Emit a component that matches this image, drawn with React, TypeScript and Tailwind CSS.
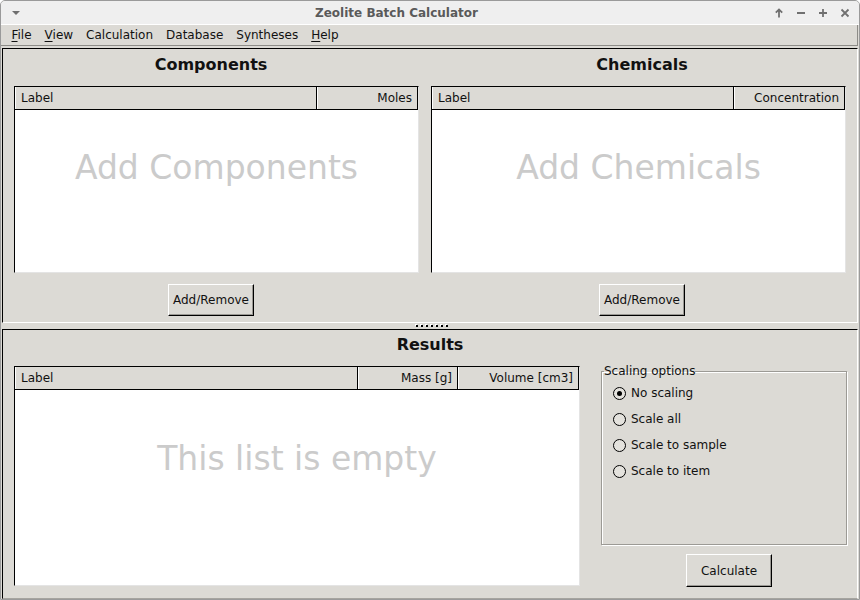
import React from 'react';

type Col = { label: string; width?: string; align?: 'left' | 'right' };

const Table: React.FC<{ cols: Col[]; placeholder: string; className: string; textTop: string }> = ({
  cols,
  placeholder,
  className,
  textTop,
}) => {
  return (
    <div className={`flex flex-col border-t border-l border-black border-b border-r border-b-[#e4e4e4] border-r-[#e4e4e4] ${className}`}>
      {/* header */}
      <div className="flex h-[23px] shrink-0 border-b border-black bg-[#dcdad5]">
        {cols.map((c) => (
          <div
            key={c.label}
            className={`flex items-center border-l border-white border-r border-r-black px-[5px] text-[12px] text-[#111] ${
              c.width ?? 'flex-1'
            } ${c.align === 'right' ? 'justify-end' : 'justify-start'}`}
          >
            {c.label}
          </div>
        ))}
      </div>
      {/* body */}
      <div className={`flex-1 bg-white ${textTop}`}>
        <div className="text-center text-[33px] leading-[40px] text-[#cbcbcb]">{placeholder}</div>
      </div>
    </div>
  );
};

const Button: React.FC<{ label: string; className?: string }> = ({ label, className }) => (
  <button
    className={`flex items-center justify-center border-t border-l border-white border-r border-b border-r-black border-b-black bg-[#dcdad5] text-[12px] text-[#111] shadow-[inset_-1px_-1px_0_#9a9893] ${className ?? ''}`}
  >
    {label}
  </button>
);

const Radio: React.FC<{ label: string; checked?: boolean }> = ({ label, checked }) => (
  <div className="flex h-[26px] items-center gap-[5px]">
    <span className="flex h-[13px] w-[13px] items-center justify-center rounded-full border border-black bg-[#e4e2dd]">
      {checked && <span className="h-[5px] w-[5px] rounded-full bg-black" />}
    </span>
    <span className="text-[12px] text-[#111]">{label}</span>
  </div>
);

const Menu: React.FC<{ label: string; u?: boolean }> = ({ label, u }) => (
  <span className="px-[6.5px] text-[12px] text-[#111]">
    {u ? (
      <>
        <span className="underline underline-offset-2">{label[0]}</span>
        {label.slice(1)}
      </>
    ) : (
      label
    )}
  </span>
);

const App: React.FC = () => {
  return (
    <div className="flex h-[600px] w-[860px] flex-col overflow-hidden rounded-t-[5px] border border-[#9a9a9a] bg-[#dcdad5] font-['DejaVu_Sans',sans-serif]">
      {/* title bar */}
      <div className="flex h-[24px] shrink-0 items-center border-b border-white bg-[#efefef]">
        <div className="flex w-[28px] justify-center pl-[1px]">
          <svg width="10" height="6" viewBox="0 0 10 6">
            <path d="M1 1 L9 1 L5 5 Z" fill="#6f6f6f" />
          </svg>
        </div>
        <div className="flex-1 text-center text-[12px] font-bold text-[#5a5a5a]">Zeolite Batch Calculator</div>
        <div className="flex w-[95px] items-center gap-[12px] pl-[10px]">
          <svg width="10" height="10" viewBox="0 0 10 10" stroke="#707070" strokeWidth="1.8" fill="none">
            <path d="M5 9.5 V1.5 M1.8 4.6 L5 1.4 L8.2 4.6" />
          </svg>
          <svg width="10" height="10" viewBox="0 0 10 10" stroke="#707070" strokeWidth="1.8" fill="none">
            <path d="M1 5 H9" />
          </svg>
          <svg width="10" height="10" viewBox="0 0 10 10" stroke="#707070" strokeWidth="1.8" fill="none">
            <path d="M1 5 H9 M5 1 V9" />
          </svg>
          <svg width="10" height="10" viewBox="0 0 10 10" stroke="#707070" strokeWidth="1.8" fill="none">
            <path d="M1.5 1.5 L8.5 8.5 M8.5 1.5 L1.5 8.5" />
          </svg>
        </div>
      </div>

      {/* menu bar */}
      <div className="mr-[1px] flex h-[21px] shrink-0 items-center border-b border-r border-[#8d8c88] pl-[4px]">
        <Menu label="File" u />
        <Menu label="View" u />
        <Menu label="Calculation" />
        <Menu label="Database" />
        <Menu label="Syntheses" />
        <Menu label="Help" u />
      </div>

      {/* top panel */}
      <div className="mx-[1px] mt-[2px] flex h-[275px] shrink-0 border-t border-l border-black border-b border-r border-b-white border-r-white">
        <div className="flex w-[416px] flex-col">
          <div className="mt-[6px] h-[20px] text-center text-[16px] font-bold leading-[20px] text-[#111]">Components</div>
          <Table
            className="ml-[11px] mt-[11px] h-[187px] w-[405px]"
            textTop="pt-[38px]"
            placeholder="Add Components"
            cols={[
              { label: 'Label' },
              { label: 'Moles', width: 'w-[101px]', align: 'right' },
            ]}
          />
          <div className="mt-[11px] flex justify-center">
            <Button label="Add/Remove" className="h-[32px] w-[86px]" />
          </div>
        </div>
        <div className="flex flex-1 flex-col">
          <div className="mt-[6px] h-[20px] pl-[8px] text-center text-[16px] font-bold leading-[20px] text-[#111]">Chemicals</div>
          <Table
            className="ml-[12px] mt-[11px] h-[187px] w-[415px]"
            textTop="pt-[38px]"
            placeholder="Add Chemicals"
            cols={[
              { label: 'Label' },
              { label: 'Concentration', width: 'w-[111px]', align: 'right' },
            ]}
          />
          <div className="mt-[11px] flex justify-center pl-[8px]">
            <Button label="Add/Remove" className="h-[32px] w-[86px]" />
          </div>
        </div>
      </div>

      {/* splitter */}
      <div className="flex h-[6px] shrink-0 items-center justify-center gap-[3px] pl-[3px]">
        {[0, 1, 2, 3, 4, 5, 6].map((i) => (
          <span key={i} className="h-[2px] w-[2px] bg-black shadow-[-1px_-1px_0_#fff]" />
        ))}
      </div>

      {/* bottom panel */}
      <div className="mx-[1px] flex flex-1 flex-col border-t border-l border-black border-b border-r border-b-[#a6a49f] border-r-white">
        <div className="mt-[5px] h-[20px] text-center text-[16px] font-bold leading-[20px] text-[#111]">Results</div>
        <div className="mt-[9px] flex items-start">
          <Table
            className="ml-[11px] mt-[2px] h-[220px] w-[566px]"
            textTop="pt-[49px]"
            placeholder="This list is empty"
            cols={[
              { label: 'Label' },
              { label: 'Mass [g]', width: 'w-[100px]', align: 'right' },
              { label: 'Volume [cm3]', width: 'w-[121px]', align: 'right' },
            ]}
          />
          <div className="ml-[21px] flex w-[246px] flex-col">
            <fieldset className="h-[181px] border border-[#9c9a95] shadow-[inset_1px_1px_0_#fff,1px_1px_0_#fff]">
              <legend className="ml-[2px] text-[12px] leading-[14px] text-[#111]">Scaling options</legend>
              <div className="pl-[11px] pt-[2px]">
                <Radio label="No scaling" checked />
                <Radio label="Scale all" />
                <Radio label="Scale to sample" />
                <Radio label="Scale to item" />
              </div>
            </fieldset>
            <div className="mt-[9px] pl-[85px]">
              <Button label="Calculate" className="h-[33px] w-[86px]" />
            </div>
          </div>
        </div>
      </div>
    </div>
  );
};

export default App;
